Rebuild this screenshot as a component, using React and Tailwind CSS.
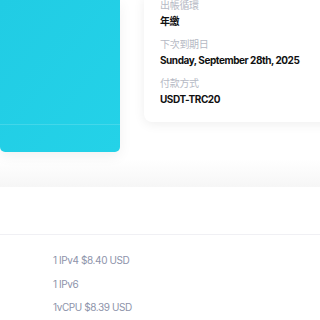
export default function App() {
  const detalles = [
    { label: '出帳循環', value: '年繳' },
    { label: '下次到期日', value: 'Sunday, September 28th, 2025' },
    { label: '付款方式', value: 'USDT-TRC20' },
  ];

  const opciones = ['1 IPv4 $8.40 USD', '1 IPv6', '1vCPU $8.39 USD'];

  return (
    <div
      className="w-[320px] h-[320px] overflow-hidden bg-white"
      style={{ fontFamily: 'Inter, "Noto Sans CJK TC", sans-serif' }}
    >
      {/* Parte superior */}
      <div className="h-[187px] bg-gradient-to-b from-white from-[85%] to-[#f6f6f6]">
        <div className="flex items-start">
          <div className="shrink-0 w-[120px] h-[152px] rounded-b-[5px] bg-gradient-to-br from-[#21cce4] to-[#24d2e8] shadow-[0_4px_14px_rgba(0,0,0,0.06)] flex flex-col justify-end">
            <div className="h-[28px] border-t border-white/15"></div>
          </div>
          <div className="shrink-0 ml-[24px] w-[200px] h-[125px] rounded-bl-lg bg-white shadow-[0_2px_12px_rgba(0,0,0,0.07)] pl-4 -mt-[3px]">
            {detalles.map(d => (
              <div key={d.label} className="mb-[7px]">
                <p className="text-[10px] leading-[16px] text-[#b5b9c4] tracking-[-0.3px]">{d.label}</p>
                <p className="text-[10px] leading-[16px] font-bold text-[#111] tracking-[-0.45px]">{d.value}</p>
              </div>
            ))}
          </div>
        </div>
      </div>

      {/* Parte inferior */}
      <div className="h-[48px] border-b border-[#f0f0f4]"></div>
      <div className="pl-[53px] pt-[17px] flex flex-col gap-[7px]">
        {opciones.map(o => (
          <p key={o} className="text-[10px] leading-[16.5px] text-[#8d93aa] tracking-[-0.4px]">{o}</p>
        ))}
      </div>
    </div>
  );
}
